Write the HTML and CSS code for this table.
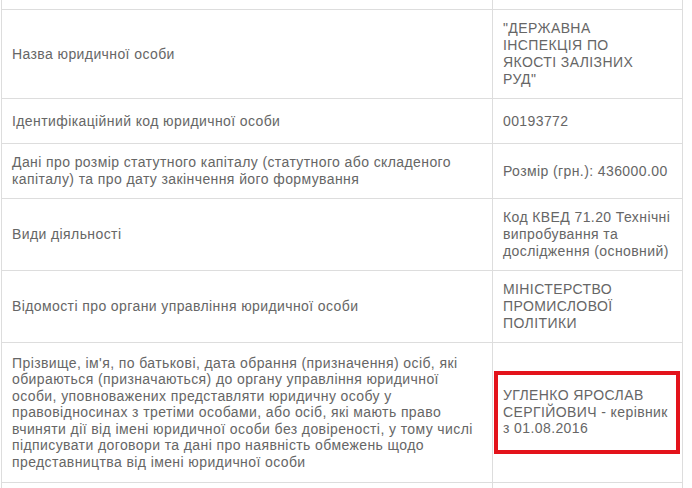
FILE: index.html
```html
<!DOCTYPE html>
<html lang="uk">
<head>
    <meta charset="UTF-8">
    <meta name="viewport" content="width=device-width, initial-scale=1.0">
    <title>Відомості про юридичну особу</title>
    <link rel="stylesheet" href="styles.css">
</head>
<body>
    <table class="info-table">
        <colgroup>
            <col class="col-label">
            <col class="col-value">
        </colgroup>
        <tr class="row-cut">
            <td></td>
            <td></td>
        </tr>
        <tr>
            <td>Назва юридичної особи</td>
            <td>"ДЕРЖАВНА<br>ІНСПЕКЦІЯ ПО<br>ЯКОСТІ ЗАЛІЗНИХ<br>РУД"</td>
        </tr>
        <tr class="row-short">
            <td>Ідентифікаційний код юридичної особи</td>
            <td>00193772</td>
        </tr>
        <tr>
            <td>Дані про розмір статутного капіталу (статутного або складеного<br>капіталу) та про дату закінчення його формування</td>
            <td>Розмір (грн.): 436000.00</td>
        </tr>
        <tr>
            <td>Види діяльності</td>
            <td>Код КВЕД 71.20 Технічні<br>випробування та<br>дослідження (основний)</td>
        </tr>
        <tr>
            <td>Відомості про органи управління юридичної особи</td>
            <td>МІНІСТЕРСТВО<br>ПРОМИСЛОВОЇ<br>ПОЛІТИКИ</td>
        </tr>
        <tr class="row-long">
            <td>Прізвище, ім'я, по батькові, дата обрання (призначення) осіб, які<br>обираються (призначаються) до органу управління юридичної<br>особи, уповноважених представляти юридичну особу у<br>правовідносинах з третіми особами, або осіб, які мають право<br>вчиняти дії від імені юридичної особи без довіреності, у тому числі<br>підписувати договори та дані про наявність обмежень щодо<br>представництва від імені юридичної особи</td>
            <td>
                <div class="highlight">УГЛЕНКО ЯРОСЛАВ<br>СЕРГІЙОВИЧ - керівник<br>з 01.08.2016</div>
            </td>
        </tr>
        <tr class="row-cut">
            <td></td>
            <td></td>
        </tr>
    </table>
</body>
</html>
```

FILE: styles.css
```css
body {
    margin: 0;
    background-color: #ffffff;
    font-family: "Liberation Sans", Arial, sans-serif;
    font-size: 14px;
    letter-spacing: 0.4px;
    color: #666666;
    overflow: hidden;
}
.info-table {
    width: 681px;
    margin: -1px 0 0 1px;
    border-collapse: collapse;
    table-layout: fixed;
}
.col-label {
    width: 491px;
}
.col-value {
    width: 190px;
}
.info-table td {
    border: 1px solid #dddddd;
    padding: 10px;
    line-height: 17px;
    vertical-align: middle;
    white-space: nowrap;
}
.info-table td:last-child {
    padding-right: 8px;
}
.row-cut td {
    height: 9px;
    padding: 0;
}
.row-short td {
    height: 24px;
}
.row-long td {
    height: 119px;
    line-height: 16.5px;
}
.highlight {
    margin: 0 -6px 0 -9px;
    padding: 12px 1px 13px 5px;
    border: 4px solid #e3131b;
    line-height: 16.7px;
}
```
